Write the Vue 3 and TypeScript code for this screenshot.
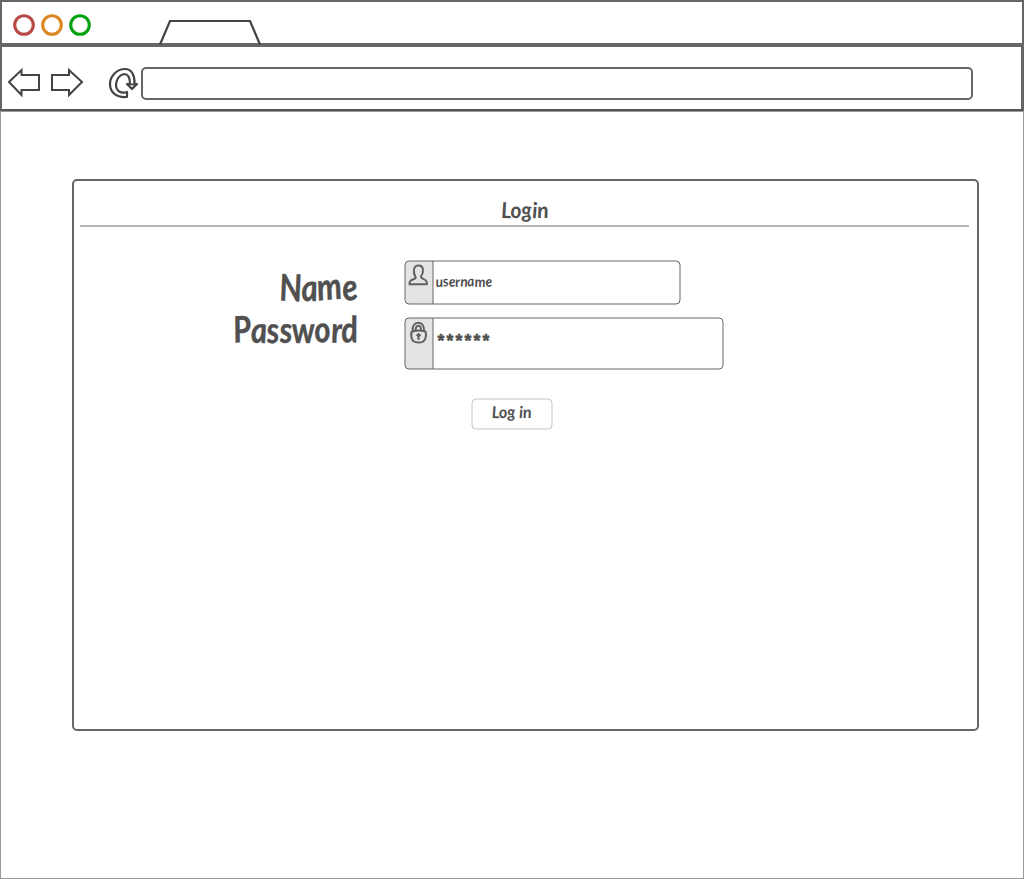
<script setup lang="ts">
interface Light { name: string; color: string }

const lights: Light[] = [
  { name: 'close', color: '#b94a48' },
  { name: 'minimize', color: '#dc8821' },
  { name: 'zoom', color: '#04a010' },
]

const mask: number[] = [441, 450, 459, 468, 477, 486]
</script>

<template>
  <div class="browser">
    <header class="titlebar">
      <div class="lights">
        <svg v-for="light in lights" :key="light.name" width="22" height="22" viewBox="0 0 22 22">
          <circle cx="11" cy="11" r="9.3" fill="none" :stroke="light.color" stroke-width="3.1" />
        </svg>
      </div>
      <svg class="tab" width="106" height="26" viewBox="157 19 106 26">
        <path d="M160 44.5 170 21H250L260 44.5" fill="none" stroke="#444" stroke-width="2.2" />
      </svg>
    </header>

    <nav class="toolbar">
      <svg class="tools" width="139" height="40" viewBox="2 62 139 40" fill="none" stroke="#444" stroke-width="2">
        <path d="M9 82 21.5 70V75H39V90H21.5V95Z" />
        <path d="M82 82 69 70V75H52V90H69V95Z" />
        <path stroke-width="2.2" stroke-linejoin="round" d="M127 97C116 98 110 92 110 84C110 76 117 69 125 69C132 69 135 76 134.5 84H137L132 89L127 84H130C130 78 128 74 124 74C119 75 116 80 116 85C116 91 121 94 127 92Z" />
        <path stroke-width="1.8" d="M128 84.5H136.5" />
      </svg>
      <div class="address"></div>
    </nav>

    <main class="page">
      <section class="panel">
        <div class="heading">
          <svg width="60" height="34" viewBox="495 193 60 34">
            <text class="hand" transform="translate(501.5 218) skewX(5)" rotate="2 0 -2 3 0" font-size="22" textLength="47.5" lengthAdjust="spacingAndGlyphs">Login</text>
          </svg>
        </div>

        <div class="form">
          <svg class="labels" width="140" height="100" viewBox="224 260 140 100">
            <text class="hand large" transform="translate(280 300.5) skewX(5)" rotate="2 0 -4 -2" font-size="37" textLength="79" lengthAdjust="spacingAndGlyphs">Name</text>
            <text class="hand large" transform="translate(234.5 342.5) skewX(5)" rotate="-2 2 0 2 0 -2 2 -1" font-size="36" textLength="124.5" lengthAdjust="spacingAndGlyphs">Password</text>
          </svg>

          <div class="fields">
            <svg class="name-field" width="278" height="46" viewBox="404 260 278 46">
              <path class="addon" d="M433 261H409Q405 261 405 265V300Q405 304 409 304H433Z" />
              <rect class="outline" x="405" y="261" width="275" height="43" rx="4" />
              <path class="outline" d="M433 261V304" />
              <path class="icon" d="M415.5 277C413 273 413 266 418 265.5C424 265 424 272 421 276.5C420.5 279 425.5 278.5 426.5 281.5L427 284.3H409.5C409 280 412 279.8 414.5 278.8Q416.3 278.2 415.5 277Z" />
              <text class="hand" transform="translate(436 286.5) skewX(5)" rotate="0 -3 2 0 3 -3 0 2" font-size="14.5" textLength="56.5" lengthAdjust="spacingAndGlyphs">username</text>
            </svg>
            <svg class="password-field" width="321" height="54" viewBox="404 317 321 54">
              <path class="addon" d="M433 318H409Q405 318 405 322V365Q405 369 409 369H433Z" />
              <rect class="outline" x="405" y="318" width="318" height="51" rx="4" />
              <path class="outline" d="M433 318V369" />
              <path class="icon" d="M411.5 332Q418 329.5 425.5 331.5Q427 338 423.5 341.3Q418 344 413 341Q410.5 337 411.5 332Z" />
              <path class="icon" d="M412.8 331C412 326 414.5 322.7 418.3 322.7C422 322.7 424.5 326 424 331M415.7 330.5C415.5 327.5 416.5 325.8 418.4 325.8C420.2 325.8 421.2 327.5 421 330.5" />
              <path class="icon keyhole" d="M418.5 334V339M417.3 335.2H419.8" />
              <text class="hand mask" y="347" font-size="17.5" text-anchor="middle"><tspan v-for="x in mask" :key="x" :x="x">*</tspan></text>
            </svg>
          </div>
        </div>

        <button class="submit" type="button">
          <svg width="82" height="32" viewBox="471 398 82 32">
            <rect class="button-outline" x="472" y="399" width="80" height="30" rx="4" />
            <text class="hand" transform="translate(492 418) skewX(5)" rotate="2 0 -2 0 3 0" font-size="16.5" textLength="40" lengthAdjust="spacingAndGlyphs">Log in</text>
          </svg>
        </button>
      </section>
    </main>
  </div>
</template>

<style>
body { background: #fff; }
</style>

<style scoped>
.browser {
  box-sizing: border-box;
  width: 1024px;
  height: 879px;
  display: flex;
  flex-direction: column;
  background: #fff;
  overflow: hidden;
}
.browser * { box-sizing: border-box; }
svg { display: block; flex: none; overflow: visible; }
.titlebar {
  height: 47px;
  flex: none;
  display: flex;
  border: 2px solid #666;
  border-bottom-width: 4px;
}
.lights { display: flex; gap: 6px; padding: 12px 0 0 11px; }
.tab { margin: 17px 0 0 66px; }
.toolbar {
  height: 64px;
  flex: none;
  display: flex;
  border-left: 2px solid #666;
  border-right: 3px solid #666;
  border-bottom: 2px solid #555;
}
.tools { margin-top: 15px; }
.address {
  width: 832px;
  height: 33px;
  margin-top: 20px;
  border: 2px solid #666;
  border-radius: 5px;
}
.page {
  flex: 1;
  border: 1px solid #999;
  padding: 67px 0 0 71px;
}
.panel {
  width: 907px;
  height: 552px;
  border: 2px solid #666;
  border-radius: 5px;
  display: flex;
  flex-direction: column;
}
.heading {
  width: 889px;
  height: 46px;
  margin-left: 6px;
  padding: 12px 0 0 415px;
  border-bottom: 2px solid #b3b3b3;
}
.form { display: flex; padding: 33px 0 0 150px; height: 171px; }
.fields { display: flex; flex-direction: column; gap: 11px; margin-left: 40px; }
.submit {
  width: 82px;
  height: 32px;
  margin-left: 397px;
  padding: 0;
  border: 0;
  background: none;
}
.hand {
  font-family: Lato, "Open Sans", sans-serif;
  font-style: italic;
  font-weight: 700;
  fill: #505050;
}
.large { stroke: #505050; stroke-width: 0.4; stroke-linejoin: round; }
.mask { font-family: "Liberation Sans", sans-serif; font-style: normal; stroke: #505050; stroke-width: 0.6; }
.outline { fill: none; stroke: #666; stroke-width: 1; }
.button-outline { fill: #fff; stroke: #c4c4c4; stroke-width: 1; }
.addon { fill: #e4e4e4; }
.icon { fill: none; stroke: #606060; stroke-width: 2; stroke-linecap: round; stroke-linejoin: round; }
.keyhole { stroke-width: 2.2; }
</style>
